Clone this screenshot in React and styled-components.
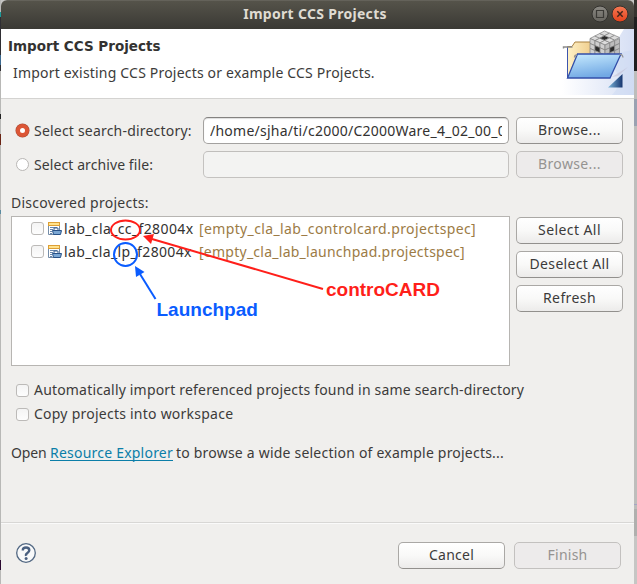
import React from "react";
import styled, { createGlobalStyle } from "styled-components";

const Global = createGlobalStyle`
  *{box-sizing:border-box}
  body{margin:0;background:#c6c6c4;overflow:hidden}
`;

const Desktop = styled.div`
  width: 637px;
  height: 584px;
  display: flex;
  overflow: hidden;
  color: #3c3b3a;
  font: 14px/20px "Noto Sans", sans-serif;
  white-space: nowrap;
`;
const LeftEdge = styled.div`
  width: 1px;
  flex: none;
  background: linear-gradient(#b9b9b7 0 12px, #1a9a9a 12px 17px, #2f2e33 17px 55px, #3c6a90 55px 65px, #2f2e33 65px 71px, #b8b8b6 71px 114px, #222 114px 119px, #b8b8b6 119px 134px, #6a2414 134px 145px, #b8b8b6 145px 210px, #5a8ba0 210px 214px, #b8b8b6 214px 560px, #2a0a30 560px 570px, #b8b8b6 570px);
`;
const RightEdge = styled.div`
  width: 3px;
  flex: none;
  background: linear-gradient(#36342f 0 17px, #1f1f1f 17px 71px, #bdbdbb 71px 99px, #9aa1b1 99px 126px, #bebebc 126px 504px, #a5a5c4 504px 505px, #bdbdbb 505px 509px, #b0b0ae 509px 536px, #c6c6c4 536px);
`;
const Window = styled.div`
  width: 633px;
  flex: none;
  display: flex;
  flex-direction: column;
  background: #f0efed;
  border-radius: 6px 6px 0 0;
  overflow: hidden;
`;
const Label = styled.span`
  letter-spacing: ${(p) => p.$ls || 0}px;
`;
const TitleBar = styled.header`
  height: 29px;
  flex: none;
  display: grid;
  grid-template-columns: 49px 1fr 54px;
  align-items: center;
  padding-bottom: 2px;
  background: linear-gradient(#55534a, #3a3934);
  border-top: 1px solid #64625a;
  color: #dfdbd2;
  font-weight: 700;
  text-align: center;
`;
const WindowButtons = styled.div`
  display: flex;
  gap: 2px;
  padding-left: 11px;
`;
const Banner = styled.section`
  height: 70px;
  flex: none;
  display: flex;
  justify-content: space-between;
  background: #fff;
  border-bottom: 1px solid #d4d3d1;
`;
const BannerText = styled.div`
  padding: 7px 0 0 7px;
`;
const Heading = styled.h1`
  margin: 0;
  font: 700 13.5px/20px "DejaVu Sans", sans-serif;
  color: #333231;
`;
const Description = styled.div`
  padding: 7px 0 0 5px;
`;
const Content = styled.main`
  height: 424px;
  flex: none;
  padding: 18px 11px 0 10px;
  border-bottom: 1px solid #d8d7d5;
`;
const SourceRow = styled.div`
  display: grid;
  grid-template-columns: 185px 306px 107px;
  column-gap: 7px;
  align-items: center;
  height: 27px;
  margin-bottom: 7px;
`;
const Choice = styled.label`
  display: flex;
  align-items: center;
  gap: 5px;
  height: 24px;
  padding-left: 5px;
`;
const Radio = styled.span`
  width: 13px;
  height: 13px;
  flex: none;
  border-radius: 50%;
  border: ${(p) => (p.$on ? "4px solid #dc5636" : "1px solid #b9b7b5")};
  background: #fff;
  box-shadow: ${(p) => (p.$on ? "0 0 0 .5px #a94d38" : "none")};
`;
const Check = styled.span`
  width: 13px;
  height: 13px;
  flex: none;
  border: 1px solid #bcbab8;
  border-radius: 3px;
  background: linear-gradient(#f4f4f4, #fdfdfd);
`;
const Field = styled.div`
  height: 27px;
  padding: 3px 0 0 6px;
  border: 1px solid ${(p) => (p.$disabled ? "#c4c2c0" : "#a3a19f")};
  border-top-color: ${(p) => (p.$disabled ? "#c0bebc" : "#848280")};
  border-radius: 5px;
  background: ${(p) => (p.$disabled ? "#f3f3f2" : "#fff")};
  box-shadow: ${(p) => (p.$disabled ? "none" : "inset 0 1px 1px #ddd")};
  color: #333231;
`;
const Clip = styled.div`
  width: 292px;
  overflow: hidden;
`;
const Button = styled.button`
  width: 107px;
  height: 27px;
  padding: 0 0 1px;
  border: 1px solid ${(p) => (p.disabled ? "#c3c1bf" : "#aaa8a5")};
  border-bottom-color: ${(p) => (p.disabled ? "#c3c1bf" : "#92908d")};
  border-radius: 5px;
  background: ${(p) => (p.disabled ? "#edebeb" : "linear-gradient(#fff, #f9f9f8 50%, #ecebea)")};
  color: ${(p) => (p.disabled ? "#959391" : "#3c3b3a")};
  font: inherit;
  line-height: 20px;
`;
const ListLabel = styled.div`
  margin-top: 15px;
  height: 23px;
  line-height: 20px;
`;
const Projects = styled.div`
  display: flex;
  gap: 6px;
`;
const List = styled.div`
  position: relative;
  width: 499px;
  height: 150px;
  border: 1px solid #b7b5b2;
  background: #fff;
`;
const Project = styled.div`
  display: flex;
  align-items: center;
  height: 23px;
  padding-left: 19px;
  color: #333231;
  svg { margin: 0 2px 0 4px; flex: none; }
`;
const Name = styled(Label)`
  width: 135px;
`;
const Spec = styled(Label)`
  color: #9c7b45;
`;
const Annotation = styled.svg`
  position: absolute;
  left: -12px;
  top: -217px;
  pointer-events: none;
  font: 700 19px "Liberation Sans", sans-serif;
`;
const ButtonColumn = styled.div`
  display: flex;
  flex-direction: column;
  gap: 7px;
  padding-top: 1px;
`;
const Options = styled.div`
  margin-top: 12px;
`;
const Explore = styled.p`
  display: flex;
  margin: 17px 0 0;
`;
const Link = styled.a`
  height: 18px;
  margin-right: 3px;
  border-bottom: 1px solid #0b7ea8;
  color: #0b7ea8;
`;
const Footer = styled.footer`
  display: flex;
  gap: 9px;
  padding: 18px 13px 0 14px;
  height: 61px;
  border-top: 1px solid #fafafa;
`;
const HelpIcon = styled.svg`
  margin-right: auto;
`;

function WindowControl({ close }) {
  return (
    <svg width="18" height="18">
      <defs>
        <linearGradient id="closeFill" x2="0" y2="1"><stop stopColor="#f47a55" /><stop offset="1" stopColor="#e5411b" /></linearGradient>
        <linearGradient id="maxFill" x2="0" y2="1"><stop stopColor="#8b8983" /><stop offset="1" stopColor="#66645e" /></linearGradient>
      </defs>
      <circle cx="9" cy="9" r="8" fill={close ? "url(#closeFill)" : "url(#maxFill)"} stroke="#33322e" />
      {close ? <path d="M6.3 6.3l5.4 5.4M11.7 6.3l-5.4 5.4" stroke="#42241a" strokeWidth="1.5" /> : <path d="M5.5 5.5h7v7h-7z" fill="none" stroke="#3b3a36" strokeWidth="1.2" />}
    </svg>
  );
}

/* Each cube face: origin corner, the two edge vectors, and its tile colour. */
const faces = [
  { o: [590, 38.5], u: [14.5, -7.5], v: [15, 6.5], fill: "#dcdcdc" },
  { o: [590, 38.5], u: [15, 6.5], v: [0, 15], fill: "#cfcfcf" },
  { o: [605, 45], u: [14.5, -6.5], v: [0, 15], fill: "#bdbdbd" },
];
const tiles = faces.flatMap(({ o, u, v, fill }) =>
  Array.from({ length: 9 }, (_, k) => {
    const a = (k % 3) / 3;
    const b = Math.floor(k / 3) / 3;
    const at = (s, t) => [0, 1].map((i) => (o[i] + u[i] * s + v[i] * t).toFixed(2)).join(",");
    const e = 1 / 3;
    return { points: [at(a, b), at(a + e, b), at(a + e, b + e), at(a, b + e)].join(" "), fill: k === 4 ? "#2b2b2b" : fill };
  })
);

function ImportArt() {
  return (
    <svg width="76" height="69" viewBox="558 29 76 69">
      <defs>
        <linearGradient id="wash"><stop stopColor="#fff" /><stop offset="1" stopColor="#d6dff4" /></linearGradient>
        <linearGradient id="folder" x2=".3" y2="1"><stop stopColor="#c9ecff" /><stop offset="1" stopColor="#72a9e4" /></linearGradient>
        <linearGradient id="back"><stop stopColor="#fff2c7" /><stop offset="1" stopColor="#e6b769" /></linearGradient>
        <linearGradient id="corner"><stop stopColor="#7fb8dc" /><stop offset="1" stopColor="#16356f" /></linearGradient>
      </defs>
      <path d="M562 95V70Q606 62 624 29H634V95z" fill="url(#wash)" />
      <path d="M606 62Q617 51 634 50V95H612Q629 77 606 62" fill="#c9d6f2" opacity=".4" />
      <path d="M567.500 77V46.500h4.500l3-4.500H592v5h14v30z" fill="url(#back)" stroke="#a9803f" />
      <path d="M567.500 78V47" stroke="#3d55ae" />
      <path d="M563.500 48.500v-1.500h9" fill="none" stroke="#8c8c8c" strokeWidth="1.400" />
      {tiles.map((t) => (
        <polygon key={t.points} points={t.points} fill={t.fill} stroke="#808080" strokeWidth=".7" />
      ))}
      <path d="M577.500 54L567.500 78H610L621 54z" fill="url(#folder)" stroke="#334fa9" strokeWidth="1.300" />
      <path d="M574.500 57.500q0-2.500 2.500-2.500M619.500 54.500q3-.5 3.500 3" fill="none" stroke="#929292" strokeWidth="1.300" />
      <path d="M612 77l16-10-10 9z" fill="#b8a9bd" opacity=".35" />
      <path d="M608 87.500L622.500 74v13.500z" fill="url(#corner)" />
    </svg>
  );
}

function SpecIcon() {
  return (
    <svg width="14" height="15" viewBox="0 0 14 15">
      <path d="M.5 1.500h11v12H.5z" fill="#fff" stroke="#758da8" />
      <path d="M0 1h12v4H0z" fill="#dd9f35" />
      <path d="M1 2h10v2H1z" fill="#ffe28c" />
      <path d="M2 6.500h7M2 8.500h3M2 10.500h2M2 12.500h2" stroke="#6686ad" />
      <path d="M6 9V7h4v2" fill="#fff" stroke="#365e92" />
      <path d="M4.500 9.500h9l-1 4h-7z" fill="#7ba7d4" stroke="#275288" />
    </svg>
  );
}

const projects = [
  { name: "lab_cla_cc_f28004x", spec: "[empty_cla_lab_controlcard.projectspec]", ns: 0.38, ss: 0.37 },
  { name: "lab_cla_lp_f28004x", spec: "[empty_cla_lab_launchpad.projectspec]", ns: 0.36, ss: 0.25 },
];

export default function App() {
  return (
    <Desktop>
      <Global />
      <LeftEdge />
      <Window>
        <TitleBar>
          <span />
          <Label $ls={0.3}>Import CCS Projects</Label>
          <WindowButtons><WindowControl /><WindowControl close /></WindowButtons>
        </TitleBar>
        <Banner>
          <BannerText>
            <Heading>Import CCS Projects</Heading>
            <Description><Label $ls={0.19}>Import existing CCS Projects or example CCS Projects.</Label></Description>
          </BannerText>
          <ImportArt />
        </Banner>
        <Content>
          <SourceRow>
            <Choice><Radio $on /><Label $ls={0.2}>Select search-directory:</Label></Choice>
            <Field><Clip><Label $ls={0.25}>/home/sjha/ti/c2000/C2000Ware_4_02_00_00</Label></Clip></Field>
            <Button><Label $ls={0.36}>Browse...</Label></Button>
          </SourceRow>
          <SourceRow>
            <Choice><Radio /><Label $ls={0.09}>Select archive file:</Label></Choice>
            <Field $disabled />
            <Button disabled><Label $ls={0.36}>Browse...</Label></Button>
          </SourceRow>
          <ListLabel><Label $ls={0.27}>Discovered projects:</Label></ListLabel>
          <Projects>
            <List>
              {projects.map((p) => (
                <Project key={p.name}>
                  <Check /><SpecIcon />
                  <Name $ls={p.ns}>{p.name}</Name>
                  <Spec $ls={p.ss}>{p.spec}</Spec>
                </Project>
              ))}
              <Annotation width="510" height="360">
                <g fill="none" stroke="#ff1f1a" strokeWidth="2">
                  <ellipse cx="125.500" cy="230" rx="14.500" ry="9.500" />
                  <path d="M323 289L152 239" />
                </g>
                <path d="M143 236l11-2-3 10z" fill="#ff1f1a" />
                <g fill="none" stroke="#0a5cff" strokeWidth="2">
                  <circle cx="125.500" cy="254.500" r="11.500" />
                  <path d="M155.500 299L140 274" />
                </g>
                <path d="M135 266l9.500 6-8.500 5z" fill="#0a5cff" />
                <text x="326" y="296" fill="#ff1f1a">controCARD</text>
                <text x="156.500" y="316" fill="#0a5cff">Launchpad</text>
              </Annotation>
            </List>
            <ButtonColumn>
              <Button><Label $ls={0.42}>Select All</Label></Button>
              <Button><Label $ls={0.34}>Deselect All</Label></Button>
              <Button><Label $ls={0.4}>Refresh</Label></Button>
            </ButtonColumn>
          </Projects>
          <Options>
            <Choice><Check /><Label $ls={0.18}>Automatically import referenced projects found in same search-directory</Label></Choice>
            <Choice><Check /><Label $ls={0.24}>Copy projects into workspace</Label></Choice>
          </Options>
          <Explore>
            <Label $ls={-0.15}>Open&nbsp;</Label>
            <Link><Label $ls={0.22}>Resource Explorer</Label></Link>
            <Label $ls={0.21}>to browse a wide selection of example projects...</Label>
          </Explore>
        </Content>
        <Footer>
          <HelpIcon width="22" height="22">
            <circle cx="11" cy="11" r="9.300" fill="#f8f9fa" stroke="#526883" strokeWidth="1.300" />
            <path d="M7.800 8.500Q7.700 5.500 11 5.500T14.300 8.300Q14.300 9.800 12.400 11T11.100 13.800" fill="none" stroke="#4a6080" strokeWidth="2.400" />
            <circle cx="11.100" cy="16.500" r="1.500" fill="#4a6080" />
          </HelpIcon>
          <Button><Label $ls={0.23}>Cancel</Label></Button>
          <Button disabled><Label $ls={0.25}>Finish</Label></Button>
        </Footer>
      </Window>
      <RightEdge />
    </Desktop>
  );
}
